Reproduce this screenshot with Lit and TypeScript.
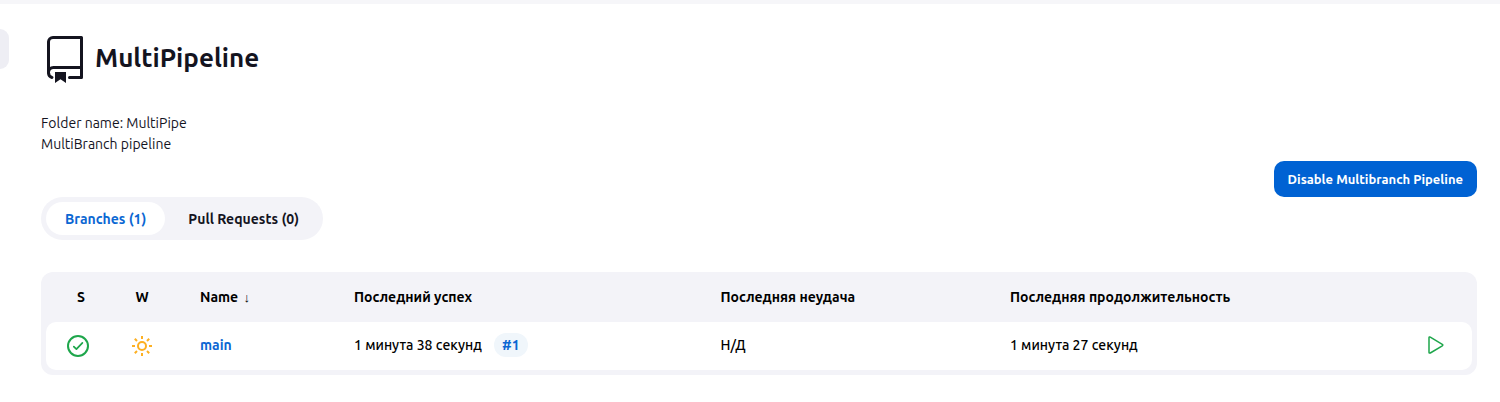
import { LitElement, html, css } from "lit";
import { customElement, state } from "lit/decorators.js";

interface Branch {
  name: string;
  lastSuccess: string;
  build: string;
  lastFailure: string;
  lastDuration: string;
}

@customElement("app-root")
export class AppRoot extends LitElement {
  static styles = css`
    :host {
      display: block;
      position: relative;
      box-sizing: border-box;
      border-top: 4px solid #f6f6f9;
      background: #fff;
      color: #14141f;
      font: 14px/21px Ubuntu, "Noto Sans", "Open Sans", sans-serif;
      --blue: #0b67d3;
      --panel: #f3f3f8;
    }
    a {
      color: var(--blue);
      text-decoration: none;
    }
    svg {
      display: block;
      fill: none;
      stroke-linecap: round;
      stroke-linejoin: round;
    }
    .handle {
      position: absolute;
      left: 0;
      top: 25px;
      width: 9px;
      height: 40px;
      padding: 0;
      border: 0;
      border-radius: 0 10px 10px 0;
      background: #eeeef4;
    }
    main {
      display: flex;
      flex-direction: column;
      padding: 30px 23px 27px 41px;
    }
    .title {
      display: flex;
      align-items: center;
      gap: 6px;
    }
    h1 {
      margin: 0;
      font-size: 26px;
      line-height: 32px;
      font-weight: 700;
      padding-bottom: 2px;
    }
    .about {
      margin: 29px 0 0;
    }
    .action {
      align-self: flex-end;
      margin-top: 6px;
      height: 36px;
      padding: 0 14px;
      border: 0;
      border-radius: 10px;
      background: #0062d3;
      color: #fff;
      font: inherit;
      font-size: 13px;
      font-weight: 700;
    }
    .tabs {
      align-self: flex-start;
      display: flex;
      gap: 4px;
      padding: 5px;
      border-radius: 22px;
      background: var(--panel);
    }
    .tab {
      padding: 7px 19px 5px;
      border-radius: 17px;
      color: #14141f;
      font-weight: 700;
    }
    .tab.active {
      background: #fff;
      color: var(--blue);
    }
    .panel {
      margin-top: 32px;
      padding: 0 5px 5px;
      border-radius: 12px;
      background: var(--panel);
    }
    table {
      width: 100%;
      table-layout: fixed;
      border-collapse: separate;
      border-spacing: 0;
      color: #000;
    }
    th,
    td {
      padding: 0 0 0 26px;
      text-align: left;
      white-space: nowrap;
    }
    th {
      height: 50px;
      font-weight: 700;
    }
    td {
      height: 48px;
      padding-bottom: 2px;
      box-sizing: border-box;
      background: #fff;
      font-weight: 500;
    }
    th.icon,
    td.icon {
      width: 64px;
      padding: 0;
      text-align: center;
    }
    th.status {
      box-sizing: border-box;
      padding-left: 6px;
    }
    td.icon {
      padding-bottom: 2px;
    }
    .icon svg {
      margin: 0 auto;
    }
    th.action-col {
      width: 72px;
      padding: 0;
    }
    .name {
      width: 10.8%;
      box-sizing: border-box;
    }
    .success {
      width: 25.7%;
      box-sizing: border-box;
    }
    .failure {
      width: 20.3%;
      box-sizing: border-box;
    }
    td:first-child {
      border-radius: 10px 0 0 10px;
    }
    td:last-child {
      border-radius: 0 10px 10px 0;
    }
    td .strong {
      font-weight: 700;
    }
    .arrow {
      margin-left: 2px;
      font-size: 13px;
      font-weight: 400;
    }
    .build {
      display: inline-block;
      margin-left: 9px;
      padding: 2px 8px 1px;
      border-radius: 12px;
      background: #f0f6fb;
      font-weight: 600;
    }
    .run {
      display: block;
      margin: 0 auto;
      padding: 0;
      border: 0;
      background: none;
    }
  `;

  @state() private tab = 0;

  private tabs = ["Branches (1)", "Pull Requests (0)"];

  private branches: Branch[] = [
    {
      name: "main",
      lastSuccess: "1 минута 38 секунд",
      build: "#1",
      lastFailure: "Н/Д",
      lastDuration: "1 минута 27 секунд",
    },
  ];

  private select(e: Event, i: number) {
    e.preventDefault();
    this.tab = i;
  }

  private row(b: Branch) {
    return html`<tr>
      <td class="icon">
        <svg width="24" height="24" viewBox="0 0 24 24" stroke="#1ea64b" stroke-width="2" role="img" aria-label="Success">
          <circle cx="12" cy="13" r="10" />
          <path d="M7.8 13.6 10.4 16.2 16.4 9.8" stroke-width="1.7" />
        </svg>
      </td>
      <td class="icon">
        <svg width="24" height="24" viewBox="0 0 24 24" stroke="#fdb022" stroke-width="2" role="img" aria-label="100%">
          <circle cx="12" cy="13" r="4" />
          <path
            stroke-linecap="butt"
            d="M12 3v3M12 20v3M2 13h3M19 13h3M4.8 5.8 7 8M17 18l2.2 2.2M4.8 20.2 7 18M17 8l2.2-2.2"
          />
        </svg>
      </td>
      <td><a class="strong" href="#main">${b.name}</a></td>
      <td>${b.lastSuccess} <a class="build" href="#build">${b.build}</a></td>
      <td>${b.lastFailure}</td>
      <td>${b.lastDuration}</td>
      <td class="icon">
        <button class="run" aria-label="Build ${b.name}">
          <svg width="24" height="24" viewBox="0 0 24 24" stroke="#1ea64b" stroke-width="1.5">
            <path d="M5 4.8v14.4c0 .8.6 1.1 1.3.8L18.3 12.8c.7-.4.7-1.1 0-1.5L6.3 4.1C5.6 3.7 5 4 5 4.8Z" />
          </svg>
        </button>
      </td>
    </tr>`;
  }

  render() {
    return html`
      <button class="handle" aria-label="Open side panel"></button>
      <main>
        <div class="title">
          <svg width="48" height="50" viewBox="0 0 48 50" stroke="#14141f" stroke-width="3" aria-hidden="true">
            <path d="M11 43.500C9 43 7.500 41 7.500 38.500V8a4.500 4.500 0 0 1 4.500-4.500H40.500V43.500H28.500" />
            <path d="M7.500 38.500c0-3 2-5 5-5H40.500" />
            <path d="M14 38H25V49L19.500 45.200 14 49Z" fill="#14141f" stroke="none" />
          </svg>
          <h1>MultiPipeline</h1>
        </div>
        <p class="about">Folder name: MultiPipe<br />MultiBranch pipeline</p>
        <button class="action">Disable Multibranch Pipeline</button>
        <nav class="tabs">
          ${this.tabs.map(
            (label, i) => html`<a
              class="tab ${i === this.tab ? "active" : ""}"
              href="#tab"
              @click=${(e: Event) => this.select(e, i)}
              >${label}</a
            >`
          )}
        </nav>
        <div class="panel">
          <table>
            <thead>
              <tr>
                <th class="icon status">S</th>
                <th class="icon">W</th>
                <th class="name">Name <span class="arrow">↓</span></th>
                <th class="success">Последний успех</th>
                <th class="failure">Последняя неудача</th>
                <th>Последняя продолжительность</th>
                <th class="action-col"></th>
              </tr>
            </thead>
            <tbody>
              ${this.branches.map((b) => this.row(b))}
            </tbody>
          </table>
        </div>
      </main>
    `;
  }
}
